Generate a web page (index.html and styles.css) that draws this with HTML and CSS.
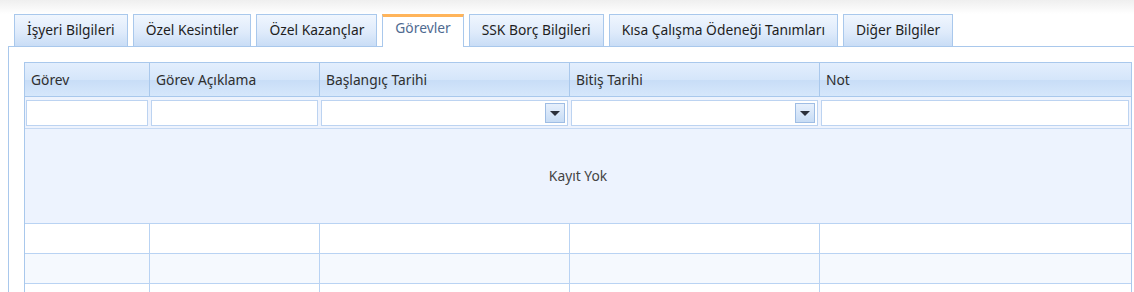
FILE: index.html
```html
<!DOCTYPE html>
<html lang="tr">
<head>
    <meta charset="UTF-8">
    <title>Görevler</title>
    <link rel="stylesheet" href="styles.css">
</head>
<body>
    <div class="tabs">
        <div class="tab">İşyeri Bilgileri</div>
        <div class="tab">Özel Kesintiler</div>
        <div class="tab">Özel Kazançlar</div>
        <div class="tab active">Görevler</div>
        <div class="tab">SSK Borç Bilgileri</div>
        <div class="tab">Kısa Çalışma Ödeneği Tanımları</div>
        <div class="tab">Diğer Bilgiler</div>
    </div>
    <div class="panel">
        <div class="grid">
            <div class="row head">
                <div class="cell">Görev</div>
                <div class="cell">Görev Açıklama</div>
                <div class="cell">Başlangıç Tarihi</div>
                <div class="cell">Bitiş Tarihi</div>
                <div class="cell">Not</div>
            </div>
            <div class="row filter">
                <div class="cell"><div class="box"></div></div>
                <div class="cell"><div class="box"></div></div>
                <div class="cell"><div class="box date"><span class="drop"></span></div></div>
                <div class="cell"><div class="box date"><span class="drop"></span></div></div>
                <div class="cell"><div class="box"></div></div>
            </div>
            <div class="empty">Kayıt Yok</div>
            <div class="row data">
                <div class="cell"></div><div class="cell"></div><div class="cell"></div><div class="cell"></div><div class="cell"></div>
            </div>
            <div class="row data alt">
                <div class="cell"></div><div class="cell"></div><div class="cell"></div><div class="cell"></div><div class="cell"></div>
            </div>
            <div class="row data">
                <div class="cell"></div><div class="cell"></div><div class="cell"></div><div class="cell"></div><div class="cell"></div>
            </div>
        </div>
    </div>
</body>
</html>
```

FILE: styles.css
```css
body {
    margin: 0;
    height: 292px;
    overflow: hidden;
    font-family: "Noto Sans", sans-serif;
    font-size: 13.8px;
    color: #1e1e1e;
    background: linear-gradient(#efefef, #ffffff 14px);
}
.tabs {
    display: flex;
    gap: 5px;
    padding: 14px 0 0 14px;
    height: 32px;
}
.tab {
    box-sizing: border-box;
    height: 32px;
    padding: 0 12px;
    line-height: 30px;
    border: 1px solid #a9c8ec;
    border-bottom: none;
    background: linear-gradient(#f0f6fe, #dfebfb 55%, #c9ddf6);
}
.tab.active {
    background: #fff;
    color: #4f6a90;
    border-top: 3px solid #ffb45a;
    line-height: 22px;
    height: 33px;
    margin-bottom: -1px;
    position: relative;
}
.panel {
    margin-left: 8px;
    border-left: 1px solid #a9c8ec;
    border-top: 1px solid #a9c8ec;
    padding: 15px 0 0 15px;
}
.grid {
    width: 1106px;
    border: 1px solid #a9c8ec;
    border-bottom: none;
}
.row {
    display: grid;
    grid-template-columns: 125px 170px 250px 250px 1fr;
}
.head {
    height: 33px;
    border-bottom: 1px solid #a9c8ec;
    background: linear-gradient(#e3eefd, #d5e6fa 50%, #c8ddf7 52%, #d6e7fb);
}
.head .cell {
    border-right: 1px solid #a9c8ec;
    line-height: 33px;
    padding-left: 6px;
    color: #2e2e2e;
}
.head .cell:last-child {
    border-right: none;
}
.filter {
    height: 31px;
    background: #eef3fd;
    border-bottom: 1px solid #c5d9f3;
}
.filter .cell {
    padding: 3px 2px 3px 1px;
}
.box {
    box-sizing: border-box;
    height: 26px;
    background: #fff;
    border: 1px solid #bcd3f1;
    display: flex;
    justify-content: flex-end;
    align-items: center;
    padding-right: 2px;
}
.drop {
    box-sizing: border-box;
    width: 20px;
    height: 20px;
    border: 1px solid #9fbde4;
    background: linear-gradient(#e7f0fc, #c7dcf5);
    display: flex;
    align-items: center;
    justify-content: center;
}
.drop::after {
    content: "";
    border-left: 5px solid transparent;
    border-right: 5px solid transparent;
    border-top: 5px solid #2a2f3a;
}
.empty {
    height: 94px;
    line-height: 94px;
    text-align: center;
    background: #edf3fe;
    border-bottom: 1px solid #b9d3f3;
    color: #444;
}
.data {
    height: 29px;
    border-bottom: 1px solid #b9d3f3;
    background: #fff;
}
.data.alt {
    background: #f5f9fe;
}
.data .cell {
    border-right: 1px solid #b9d3f3;
}
.data .cell:last-child {
    border-right: none;
}
```
